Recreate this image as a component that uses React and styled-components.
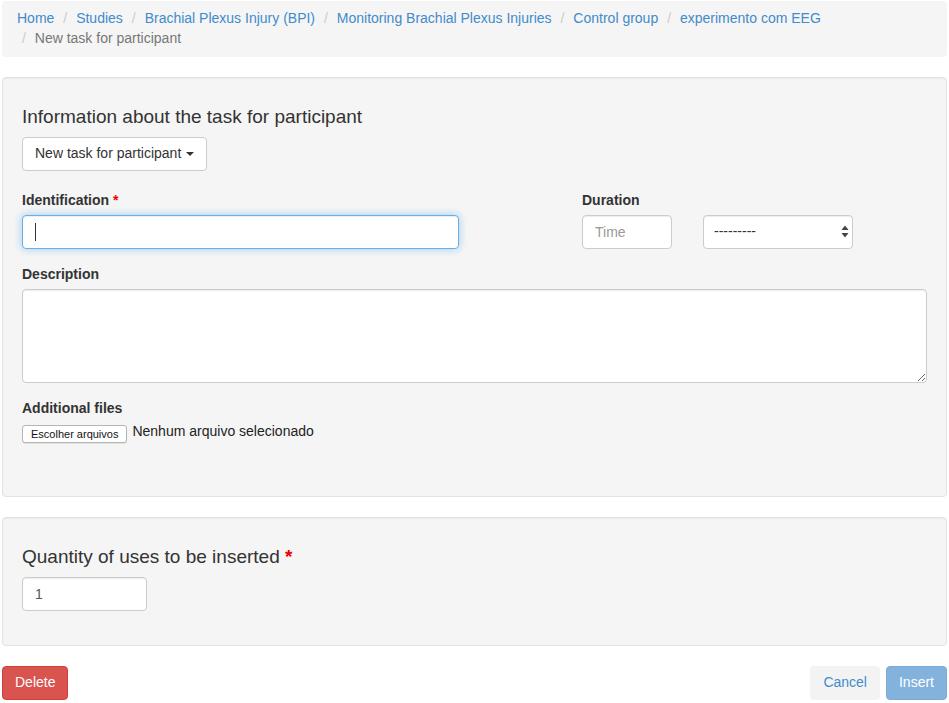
import styled, { createGlobalStyle, css } from "styled-components";

const GlobalStyle = createGlobalStyle`
  * {
    box-sizing: border-box;
  }

  body {
    margin: 0;
    background: #fff;
    font-family: "Liberation Sans", Arial, sans-serif;
    font-size: 14px;
    line-height: 1.42857;
    color: #333;
  }
`;

const Page = styled.div`
  padding: 1px 2px 4px;
`;

const Breadcrumb = styled.ol`
  display: flex;
  flex-wrap: wrap;
  column-gap: 4px;
  margin: 0 0 20px;
  padding: 8px 15px;
  list-style: none;
  background-color: #f5f5f5;
  border-radius: 4px;

  & > li + li::before {
    content: "/\\00a0";
    padding: 0 5px;
    color: #ccc;
  }
`;

const Crumb = styled.li`
  display: inline-block;
  color: ${(p) => (p.$active ? "#777" : "#428bca")};
`;

const CrumbLink = styled.a`
  color: #428bca;
  text-decoration: none;
`;

const Well = styled.div`
  margin-bottom: 20px;
  padding: 19px 19px ${(p) => p.$extraBottom || 19}px;
  background-color: #f5f5f5;
  border: 1px solid #e3e3e3;
  border-radius: 4px;
  box-shadow: inset 0 1px 1px rgba(0, 0, 0, 0.05);
`;

const Heading = styled.h4`
  margin: 10px 0;
  font-size: 19px;
  font-weight: 500;
  line-height: 20px;
  color: #333;
`;

const Required = styled.span`
  color: #e00;
  font-weight: 700;
`;

const Button = styled.button`
  display: inline-flex;
  align-items: center;
  height: 34px;
  padding: 6px 12px;
  font-family: inherit;
  font-size: 14px;
  line-height: 1.42857;
  border: 1px solid transparent;
  border-radius: 4px;
  cursor: pointer;

  ${(p) =>
    p.$variant === "default" &&
    css`
      color: #333;
      background-color: #fff;
      border-color: #ccc;
    `}

  ${(p) =>
    p.$variant === "danger" &&
    css`
      color: #fff;
      background-color: #d9534f;
      border-color: #d43f3a;
    `}

  ${(p) =>
    p.$variant === "light" &&
    css`
      color: #428bca;
      background-color: #f3f3f3;
    `}

  ${(p) =>
    p.$variant === "primary" &&
    css`
      color: #fff;
      background-color: #428bca;
      border-color: #357ebd;
      opacity: 0.65;
      cursor: not-allowed;
    `}
`;

const Caret = styled.span`
  display: inline-block;
  width: 0;
  height: 0;
  margin-left: 5px;
  border-top: 4px solid #333;
  border-left: 4px solid transparent;
  border-right: 4px solid transparent;
`;

const FieldRow = styled.div`
  display: grid;
  grid-template-columns: 437px 1fr;
  column-gap: 123px;
  margin-top: 19px;
`;

const FormGroup = styled.div`
  margin-bottom: ${(p) => (p.$last ? 0 : 15)}px;
`;

const Label = styled.label`
  display: block;
  margin-bottom: 5px;
  font-weight: 700;
  line-height: 20px;
`;

const fieldBase = css`
  display: block;
  height: 34px;
  padding: 6px 12px;
  font-family: inherit;
  font-size: 14px;
  line-height: 1.42857;
  color: #555;
  background-color: #fff;
  border: 1px solid #ccc;
  border-radius: 4px;
  box-shadow: inset 0 1px 1px rgba(0, 0, 0, 0.075);
  outline: none;

  &::placeholder {
    color: #999;
  }
`;

const Input = styled.input`
  ${fieldBase}
  width: ${(p) => p.$width || "100%"};

  ${(p) =>
    p.$focused &&
    css`
      border-color: #66afe9;
      box-shadow: inset 0 1px 1px rgba(0, 0, 0, 0.075),
        0 0 8px rgba(102, 175, 233, 0.6);
    `}
`;

const FocusWrap = styled.div`
  position: relative;
`;

const TextCursor = styled.span`
  position: absolute;
  left: 13px;
  top: 8px;
  width: 1px;
  height: 18px;
  background: #333;
`;

const DurationRow = styled.div`
  display: flex;
  gap: 31px;
`;

const SelectBox = styled.div`
  position: relative;
  width: 150px;
`;

const Select = styled.select`
  ${fieldBase}
  width: 100%;
  padding-left: 10px;
  color: #333;
  appearance: none;
  -webkit-appearance: none;
`;

const SelectArrows = styled.svg`
  position: absolute;
  right: 4px;
  top: 10px;
  pointer-events: none;
`;

const TextArea = styled.textarea`
  ${fieldBase}
  width: 100%;
  height: 94px;
  resize: vertical;
`;

const FileRow = styled.div`
  display: flex;
  align-items: flex-start;
  gap: 5px;
  height: 22px;
  margin-top: -2px;
`;

const FileButton = styled.button`
  height: 18px;
  margin-top: 4px;
  padding: 0 8px;
  font-family: "Liberation Sans", Arial, sans-serif;
  font-size: 11px;
  line-height: 16px;
  color: #111;
  background: #fff;
  border: 1px solid #b5b5b5;
  border-radius: 3px;
  box-shadow: 0 1px 0 rgba(0, 0, 0, 0.08);
`;

const FileStatus = styled.span`
  line-height: 20px;
  color: #222;
`;

const Actions = styled.div`
  display: flex;
  justify-content: space-between;
  align-items: center;
`;

const ActionGroup = styled.div`
  display: flex;
  gap: 6px;
`;

const crumbs = [
  "Home",
  "Studies",
  "Brachial Plexus Injury (BPI)",
  "Monitoring Brachial Plexus Injuries",
  "Control group",
  "experimento com EEG",
];

function App() {
  return (
    <>
      <GlobalStyle />
      <Page>
        <Breadcrumb>
          {crumbs.map((c) => (
            <Crumb key={c}>
              <CrumbLink href="#">{c}</CrumbLink>
            </Crumb>
          ))}
          <Crumb $active>New task for participant</Crumb>
        </Breadcrumb>

        {/* Task information */}
        <Well $extraBottom={53}>
          <Heading>Information about the task for participant</Heading>
          <Button $variant="default">
            New task for participant <Caret />
          </Button>

          <FieldRow>
            <FormGroup>
              <Label>
                Identification <Required>*</Required>
              </Label>
              <FocusWrap>
                <Input $focused />
                <TextCursor />
              </FocusWrap>
            </FormGroup>
            <FormGroup>
              <Label>Duration</Label>
              <DurationRow>
                <Input $width="90px" placeholder="Time" />
                <SelectBox>
                  <Select defaultValue="">
                    <option value="">---------</option>
                  </Select>
                  <SelectArrows width="8" height="13" viewBox="0 0 8 13">
                    <path d="M4 0.5 L7.5 5 H0.5 Z" fill="#444" />
                    <path d="M4 12.5 L7.5 8 H0.5 Z" fill="#444" />
                  </SelectArrows>
                </SelectBox>
              </DurationRow>
            </FormGroup>
          </FieldRow>

          <FormGroup>
            <Label>Description</Label>
            <TextArea />
          </FormGroup>

          <FormGroup $last>
            <Label>Additional files</Label>
            <FileRow>
              <FileButton>Escolher arquivos</FileButton>
              <FileStatus>Nenhum arquivo selecionado</FileStatus>
            </FileRow>
          </FormGroup>
        </Well>

        {/* Quantity */}
        <Well>
          <Heading>
            Quantity of uses to be inserted <Required>*</Required>
          </Heading>
          <FormGroup>
            <Input $width="125px" defaultValue="1" />
          </FormGroup>
        </Well>

        <Actions>
          <Button $variant="danger">Delete</Button>
          <ActionGroup>
            <Button $variant="light">Cancel</Button>
            <Button $variant="primary">Insert</Button>
          </ActionGroup>
        </Actions>
      </Page>
    </>
  );
}

export default App;
